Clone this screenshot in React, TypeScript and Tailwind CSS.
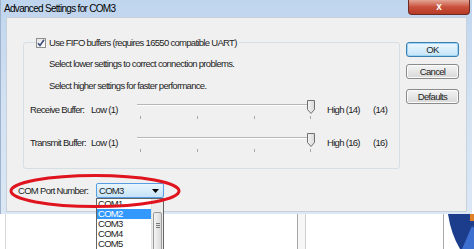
import React from 'react';

const font = "font-['Liberation_Sans',Arial,sans-serif]";

const Slider: React.FC = () => (
    <svg width="178" height="20" viewBox="0 0 178 20" className="block shrink-0">
        <line x1="0" y1="5.5" x2="176" y2="5.5" stroke="#b6b6b6" strokeWidth="1" />
        <line x1="0" y1="6.5" x2="176" y2="6.5" stroke="#ffffff" strokeWidth="1" />
        {[3, 60, 117, 173].map((x) => (
            <line key={x} x1={x + 0.5} y1="17" x2={x + 0.5} y2="20" stroke="#a8a8a8" strokeWidth="1" />
        ))}
        <defs>
            <linearGradient id="thumb" x1="0" y1="0" x2="1" y2="0">
                <stop offset="0" stopColor="#f4f4f4" />
                <stop offset="1" stopColor="#d9d9d9" />
            </linearGradient>
        </defs>
        <path d="M170.5 1.5 h7 v9 l-3.5 4 l-3.5 -4 z" fill="url(#thumb)" stroke="#707070" strokeWidth="1" />
    </svg>
);

const SliderRow: React.FC<{ label: string; high: string; value: string; className?: string }> = ({ label, high, value, className }) => (
    <div className={`flex items-start h-[20px] pl-[6px] whitespace-nowrap ${className ?? ''}`}>
        <span className="w-[61px] shrink-0 mt-[6px] leading-[10px]">{label}</span>
        <span className="w-[46px] shrink-0 mt-[6px] leading-[10px]">Low (1)</span>
        <Slider />
        <span className="w-[46px] shrink-0 ml-[12px] mt-[6px] leading-[10px]">{high}</span>
        <span className="mt-[6px] leading-[10px]">{value}</span>
    </div>
);

const DialogButton: React.FC<{ label: string; primary?: boolean; className?: string }> = ({ label, primary, className }) => (
    <button
        className={`h-[15px] w-[53px] rounded-[3px] border leading-none flex items-center justify-center ${
            primary
                ? 'border-[#3c7fb1] bg-gradient-to-b from-[#edf7fd] to-[#c4e5f8] shadow-[inset_0_0_0_1px_#9fd3f3]'
                : 'border-[#8a8a8a] bg-gradient-to-b from-[#f4f4f4] to-[#d8d8d8] shadow-[inset_0_0_0_1px_#fcfcfc]'
        } ${className ?? ''}`}
    >
        {label}
    </button>
);

const CheckBox: React.FC = () => (
    <span className="w-[10px] h-[10px] shrink-0 border border-[#8e8f8f] bg-gradient-to-br from-[#e6e6e6] to-white flex items-center justify-center">
        <svg width="8" height="8" viewBox="0 0 8 8">
            <path d="M1 4.2 L3 6.4 L7 0.8" fill="none" stroke="#3b4f7e" strokeWidth="1.6" />
        </svg>
    </span>
);

const ports = ['COM1', 'COM2', 'COM3', 'COM4', 'COM5'];

export default function App() {
    return (
        <div className={`w-[474px] h-[249px] relative overflow-hidden bg-white text-[9.5px] tracking-[-0.7px] text-[#1e1e1e] ${font}`}>
            <div className="w-[472px] h-[214px] flex flex-col bg-gradient-to-b from-[#bfd5ee] via-[#d3e2f3] to-[#dbe7f4] border-l border-[#9fb4cc]">
                {/* title bar */}
                <div className="h-[17px] flex items-start">
                    <span className="ml-[3px] mt-[3px] text-[10px] tracking-[-0.7px] leading-[11px] text-black whitespace-nowrap">Advanced Settings for COM3</span>
                    <div className="ml-auto mr-[2px] w-[62px] h-[15px] rounded-b-[4px] border border-t-0 border-[#6b2a22] bg-gradient-to-b from-[#e3a394] via-[#c8503c] to-[#b73a26] flex items-center justify-center">
                        <span className="text-white font-bold text-[10px] tracking-normal leading-none">x</span>
                    </div>
                </div>
                {/* client area */}
                <div className="flex-1 mx-[5px] mb-[2px] bg-[#f0f0f0] border border-[#c6d1dc] flex">
                    <div className="flex-1 pl-[11px] pt-[24px]">
                        <div className="ml-[5px] w-[377px] h-[127px] border border-[#d5dfe5] rounded-[3px]">
                            <div className="-mt-[6px] ml-[12px] pr-[2px] w-fit bg-[#f0f0f0] flex items-center h-[12px] whitespace-nowrap">
                                <CheckBox />
                                <span className="ml-[3px] leading-[12px]">Use FIFO buffers (requires 16550 compatible UART)</span>
                            </div>
                            <p className="mt-[9px] ml-[25px] leading-[12px] whitespace-nowrap">Select lower settings to correct connection problems.</p>
                            <p className="mt-[10px] ml-[25px] leading-[12px] whitespace-nowrap">Select higher settings for faster performance.</p>
                            <SliderRow label="Receive Buffer:" high="High (14)" value="(14)" className="mt-[7px]" />
                            <SliderRow label="Transmit Buffer:" high="High (16)" value="(16)" className="mt-[13px]" />
                        </div>
                        <div className="mt-[14px] flex items-center whitespace-nowrap">
                            <span className="w-[78px] shrink-0 leading-[12px]">COM Port Number:</span>
                            <div className="relative">
                                <div className="w-[68px] h-[15px] border border-[#569de5] rounded-[2px] bg-gradient-to-b from-[#eaf6fd] to-[#c4e3f8] flex items-center pl-[2px] pr-[4px]">
                                    <span className="leading-none">COM3</span>
                                    <svg width="7" height="4" viewBox="0 0 7 4" className="ml-auto">
                                        <path d="M0 0 H7 L3.5 4 Z" fill="#000" />
                                    </svg>
                                </div>
                                <div className="absolute top-full left-0 w-[68px] h-[60px] bg-white border border-[#646464] flex z-10">
                                    <div className="flex-1 flex flex-col">
                                        {ports.map((p) => (
                                            <div
                                                key={p}
                                                className={`h-[10px] pl-[1px] leading-[10px] ${p === 'COM2' ? 'bg-[#3399ff] text-white' : ''}`}
                                            >
                                                {p}
                                            </div>
                                        ))}
                                    </div>
                                    <div className="w-[12px] bg-[#ececec] border-l border-[#e0e0e0] flex flex-col items-center">
                                        <div className="mt-[13px] w-[9px] h-[50px] rounded-[2px] border border-[#9a9a9a] bg-gradient-to-r from-[#f4f4f4] to-[#dadada] flex flex-col items-center pt-[10px] gap-[1px]">
                                            <span className="w-[4px] h-px bg-[#7a7a7a]" />
                                            <span className="w-[4px] h-px bg-[#7a7a7a]" />
                                            <span className="w-[4px] h-px bg-[#7a7a7a]" />
                                        </div>
                                    </div>
                                </div>
                            </div>
                        </div>
                    </div>
                    <div className="w-[53px] mr-[7px] pt-[24px] flex flex-col">
                        <DialogButton label="OK" primary />
                        <DialogButton label="Cancel" className="mt-[7px]" />
                        <DialogButton label="Defaults" className="mt-[10px]" />
                    </div>
                </div>
            </div>
            {/* window behind */}
            <div className="flex h-[35px]">
                <div className="w-[5px]" />
                <div className="w-px bg-[#d8d8d8]" />
                <div className="w-[291px]" />
                <div className="w-px bg-[#a9a9a9]" />
                <div className="w-[7px] bg-[#f6f6f6]" />
                <div className="w-px bg-[#cfcfcf]" />
                <div className="w-[137px]" />
                <div className="w-px bg-[#a9a9a9]" />
                <div className="w-[4px]" />
                <svg width="26" height="35" viewBox="0 0 26 35" className="block">
                    <rect width="26" height="35" fill="#1c3c8c" />
                    <path d="M0 0 Q3 20 12 35 H0 Z" fill="#ffffff" />
                    <path d="M14 35 L24 12 L26 14 V35 Z" fill="#3d6fd1" />
                    <rect x="22" y="0" width="4" height="7" fill="#e0812a" />
                </svg>
            </div>
            {/* red annotation ring */}
            <svg width="176" height="38" viewBox="0 0 176 38" className="absolute left-[8px] top-[172px] z-20 pointer-events-none">
                <ellipse cx="87" cy="19" rx="84" ry="15.5" fill="none" stroke="#e0141e" strokeWidth="3" />
            </svg>
        </div>
    );
}
